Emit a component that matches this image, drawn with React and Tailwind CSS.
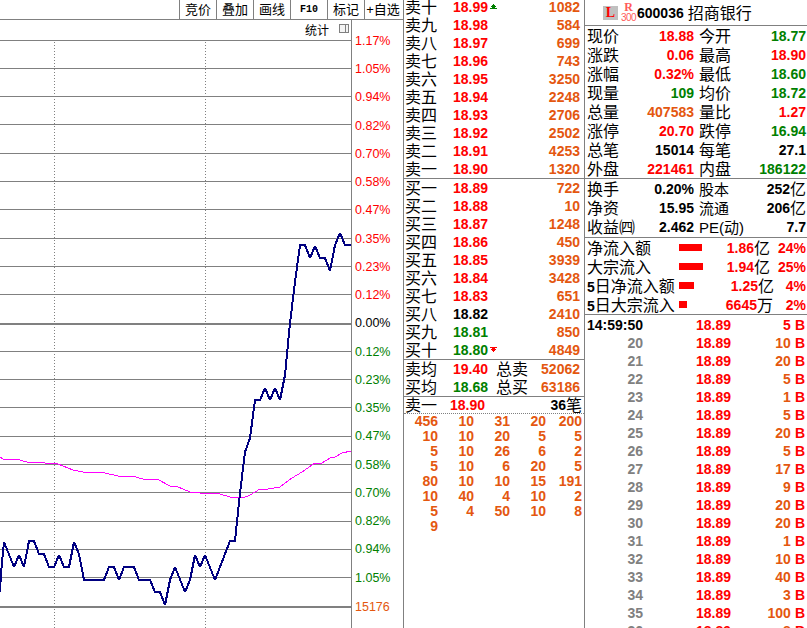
import React from 'react';

const RED = 'text-[#ff0000]';
const GREEN = 'text-[#008000]';
const ORANGE = 'text-[#e4570f]';
const BLACK = 'text-black';

const toolbarItems = ['竞价', '叠加', '画线', 'F10', '标记', '+自选'];

const axisLabels = [
  ['1.17%', RED], ['1.05%', RED], ['0.94%', RED], ['0.82%', RED], ['0.70%', RED],
  ['0.58%', RED], ['0.47%', RED], ['0.35%', RED], ['0.23%', RED], ['0.12%', RED],
  ['0.00%', BLACK],
  ['0.12%', GREEN], ['0.23%', GREEN], ['0.35%', GREEN], ['0.47%', GREEN], ['0.58%', GREEN],
  ['0.70%', GREEN], ['0.82%', GREEN], ['0.94%', GREEN], ['1.05%', GREEN],
];

const gridY = [68, 96, 124, 153, 181, 209, 238, 266, 294, 351, 379, 407, 436, 464, 492, 521, 549, 577];

const pricePoints = [
  [0, 592], [1, 573], [4, 542], [14, 567], [19, 555], [24, 567], [29, 541], [34, 541], [39, 554], [44, 554],
  [49, 567], [54, 567], [59, 555], [64, 567], [69, 567], [74, 542], [79, 554], [84, 580], [104, 580], [109, 567],
  [114, 567], [119, 580], [124, 567], [134, 567], [139, 580], [150, 580], [155, 592], [160, 592], [165, 605],
  [170, 580], [175, 567], [185, 592], [190, 580], [195, 555], [200, 567], [205, 555], [215, 580], [230, 541],
  [235, 541], [240, 493], [245, 452], [250, 438], [255, 400], [260, 400], [265, 388], [270, 400], [275, 388],
  [280, 400], [285, 375], [290, 323], [295, 282], [300, 245], [305, 245], [310, 258], [315, 246], [320, 258],
  [325, 258], [330, 271], [335, 245], [340, 233], [345, 245], [351, 245],
];

const avgPoints = [
  [0, 457], [3, 459], [16, 459], [27, 462], [45, 463], [58, 464], [73, 470], [83, 472], [105, 473], [118, 476],
  [132, 476], [143, 479], [157, 479], [170, 486], [178, 487], [190, 492], [200, 493], [220, 494], [230, 497],
  [243, 498], [250, 495], [260, 489], [268, 489], [280, 487], [292, 478], [302, 472], [315, 463], [322, 463],
  [330, 458], [335, 457], [342, 453], [351, 451],
];

const sells = [
  ['卖十', '18.99', '1082'], ['卖九', '18.98', '584'], ['卖八', '18.97', '699'], ['卖七', '18.96', '743'],
  ['卖六', '18.95', '3250'], ['卖五', '18.94', '2248'], ['卖四', '18.93', '2706'], ['卖三', '18.92', '2502'],
  ['卖二', '18.91', '4253'], ['卖一', '18.90', '1320'],
];

const buys = [
  ['买一', '18.89', '722', RED], ['买二', '18.88', '10', RED], ['买三', '18.87', '1248', RED],
  ['买四', '18.86', '450', RED], ['买五', '18.85', '3939', RED], ['买六', '18.84', '3428', RED],
  ['买七', '18.83', '651', RED], ['买八', '18.82', '2410', BLACK], ['买九', '18.81', '850', GREEN],
  ['买十', '18.80', '4849', GREEN],
];

const queue = [
  ['456', '10', '31', '20', '200'],
  ['10', '10', '20', '5', '5'],
  ['5', '10', '26', '6', '2'],
  ['5', '10', '6', '20', '5'],
  ['80', '10', '10', '15', '191'],
  ['10', '40', '4', '10', '2'],
  ['5', '4', '50', '10', '8'],
  ['9'],
];

const quotes = [
  ['现价', '18.88', RED, '今开', '18.77', GREEN],
  ['涨跌', '0.06', RED, '最高', '18.90', RED],
  ['涨幅', '0.32%', RED, '最低', '18.60', GREEN],
  ['现量', '109', GREEN, '均价', '18.72', GREEN],
  ['总量', '407583', ORANGE, '量比', '1.27', RED],
  ['涨停', '20.70', RED, '跌停', '16.94', GREEN],
  ['总笔', '15014', BLACK, '每笔', '27.1', BLACK],
  ['外盘', '221461', RED, '内盘', '186122', GREEN],
];

const fundamentals = [
  ['换手', '0.20%', '股本', '252', '亿'],
  ['净资', '15.95', '流通', '206', '亿'],
  ['收益㈣', '2.462', 'PE(动)', '7.7', ''],
];

const flows = [
  ['', '净流入额', 'w-[23px]', '1.86', '亿', 'w-[91px]', '24%'],
  ['', '大宗流入', 'w-[24px]', '1.94', '亿', 'w-[91px]', '25%'],
  ['5', '日净流入额', 'w-[15px]', '1.25', '亿', 'w-[95px]', '4%'],
  ['5', '日大宗流入', 'w-[8px]', '6645', '万', 'w-[94px]', '2%'],
];

const ticks = [
  ['14:59:50', '5'], ['20', '10'], ['21', '20'], ['22', '5'], ['23', '1'], ['24', '5'],
  ['25', '20'], ['26', '5'], ['27', '17'], ['28', '9'], ['29', '20'], ['30', '20'],
  ['31', '1'], ['32', '10'], ['33', '40'], ['34', '3'], ['35', '100'], ['36', '8'],
];

const toPoints = (pts) => pts.map(([x, y]) => `${x},${y}`).join(' ');

// CJK captions sit a pixel below the digits beside them
const Label = ({ className = '', children }) => (
  <span className={`mt-[2px] text-[16px] leading-[16px] font-normal text-black whitespace-nowrap ${className}`}>{children}</span>
);

const Num = ({ className = '', children }) => (
  <span className={`text-[14px] leading-[14px] font-bold whitespace-nowrap ${className}`}>{children}</span>
);

const UpMark = () => (
  <svg width="7" height="7" viewBox="0 0 7 7" className="ml-[2px] shrink-0" shapeRendering="crispEdges" fill="#008000">
    <rect x="3" y="0" width="1" height="1" />
    <rect x="2" y="1" width="3" height="1" />
    <rect x="1" y="2" width="5" height="1" />
    <rect x="2" y="3" width="3" height="1" />
    <rect x="0" y="4" width="7" height="1" />
  </svg>
);

const DownMark = () => (
  <svg width="7" height="7" viewBox="0 0 7 7" className="ml-[2px] shrink-0" shapeRendering="crispEdges" fill="#ff0000">
    <rect x="0" y="0" width="7" height="1" />
    <rect x="2" y="1" width="3" height="1" />
    <rect x="1" y="2" width="5" height="1" />
    <rect x="2" y="3" width="3" height="1" />
    <rect x="3" y="4" width="1" height="1" />
  </svg>
);

const PriceChart = () => (
  <svg width="351" height="587" viewBox="0 41 351 587" className="block">
    <g stroke="#808080" strokeWidth="1" shapeRendering="crispEdges">
      {gridY.map((y) => (
        <line key={y} x1="0" x2="351" y1={y + 0.5} y2={y + 0.5} />
      ))}
      <line x1="0" x2="351" y1="324" y2="324" strokeWidth="2" />
      <line x1="0" x2="351" y1="607" y2="607" strokeWidth="2" />
      <line x1="54.5" x2="54.5" y1="42" y2="628" strokeDasharray="1 2" />
      <line x1="205.5" x2="205.5" y1="42" y2="628" strokeDasharray="1 2" />
    </g>
    <polyline points={toPoints(avgPoints)} fill="none" stroke="#ff00ff" strokeWidth="1" shapeRendering="crispEdges" />
    <polyline points={toPoints(pricePoints)} fill="none" stroke="#000080" strokeWidth="2" strokeLinejoin="bevel" shapeRendering="crispEdges" />
  </svg>
);

const OrderRow = ({ name, price, volume, priceColor, mark }) => (
  <div className="flex h-[18px] shrink-0 items-center">
    <Label className="w-[48px]">{name}</Label>
    <Num className={priceColor}>{price}</Num>
    {mark}
    <Num className={`ml-auto ${ORANGE}`}>{volume}</Num>
  </div>
);

const App = () => {
  return (
    <div className="flex h-[628px] w-[807px] overflow-hidden bg-white font-['Liberation_Sans','Noto_Sans_CJK_SC',sans-serif]">
      {/* chart side */}
      <div className="flex w-[404px] shrink-0 flex-col border-r border-[#808080]">
        <div className="flex h-[20px] shrink-0 justify-end border-b border-[#808080] pr-[2px]">
          {toolbarItems.map((item) => (
            <div
              key={item}
              className={`flex w-[37px] items-center justify-center border-l border-[#808080] text-black ${
                item === 'F10' ? "font-['Liberation_Mono'] text-[10px] font-bold" : 'text-[13px]'
              }`}
            >
              {item}
            </div>
          ))}
        </div>
        <div className="flex min-h-0 flex-1">
          <div className="flex w-[352px] shrink-0 flex-col border-r border-[#808080]">
            <div className="flex h-[21px] shrink-0 items-center justify-end border-b border-[#808080] pr-[2px]">
              <span className="mr-[10px] mt-[1px] text-[12px] text-black">统计</span>
              <span className="mb-[3px] flex h-[9px] w-[10px] justify-end border border-[#808080] bg-[#f4f4f4]">
                <span className="w-[3px] border-l border-[#808080]" />
              </span>
            </div>
            <PriceChart />
          </div>
          <div className="flex flex-1 flex-col pl-[3px] pt-[7px]">
            {axisLabels.map(([text, color], i) => (
              <div key={i} className={`flex h-[28.26px] shrink-0 items-center text-[12.5px] ${color}`}>
                {text}
              </div>
            ))}
            <div className={`mt-[1px] flex h-[28px] items-center text-[12.5px] ${ORANGE}`}>15176</div>
          </div>
        </div>
      </div>

      {/* order book */}
      <div className="flex w-[181px] shrink-0 flex-col border-r border-[#808080]">
        <div className="-mt-[2px] flex h-[181px] shrink-0 flex-col border-b border-[#808080] pl-[1px] pr-[4px]">
          {sells.map(([name, price, volume], i) => (
            <OrderRow key={name} name={name} price={price} volume={volume} priceColor={RED} mark={i === 0 ? <UpMark /> : null} />
          ))}
        </div>
        <div className="flex h-[181px] shrink-0 flex-col border-b border-[#808080] pl-[1px] pr-[4px]">
          {buys.map(([name, price, volume, color], i) => (
            <OrderRow key={name} name={name} price={price} volume={volume} priceColor={color} mark={i === 9 ? <DownMark /> : null} />
          ))}
        </div>
        <div className="flex h-[37px] shrink-0 flex-col border-b border-[#808080] pl-[1px] pr-[4px]">
          <div className="flex h-[18px] items-center">
            <Label className="w-[48px]">卖均</Label>
            <Num className={`w-[43px] ${RED}`}>19.40</Num>
            <Label>总卖</Label>
            <Num className={`ml-auto ${ORANGE}`}>52062</Num>
          </div>
          <div className="flex h-[18px] items-center">
            <Label className="w-[48px]">买均</Label>
            <Num className={`w-[43px] ${GREEN}`}>18.68</Num>
            <Label>总买</Label>
            <Num className={`ml-auto ${ORANGE}`}>63186</Num>
          </div>
        </div>
        <div className="flex h-[17px] shrink-0 items-center border-b border-dotted border-[#808080] pl-[1px] pr-[2px]">
          <Label className="w-[45px]">卖一</Label>
          <Num className={RED}>18.90</Num>
          <span className="ml-auto flex items-center">
            <Num className={BLACK}>36</Num>
            <Label>笔</Label>
          </span>
        </div>
        <div className="grid grid-cols-[33px_36px_36px_36px_36px] pl-[1px] [grid-auto-rows:15px]">
          {queue.flat().map((value, i) => (
            <Num key={i} className={`text-right leading-[15px] ${ORANGE}`}>
              {value}
            </Num>
          ))}
        </div>
      </div>

      {/* quote panel */}
      <div className="flex min-w-0 flex-1 flex-col">
        <div className="flex h-[26px] shrink-0 items-center border-b border-[#808080] pl-[18px]">
          <span className="flex h-[14px] w-[15px] items-center justify-center bg-[#c0c0c0] font-['Liberation_Serif'] text-[14px] font-bold leading-none text-[#ff0000]">
            L
          </span>
          <span className="ml-[3px] flex w-[15px] flex-col items-center text-[#ff5a5a]">
            <span className="font-['Liberation_Serif'] text-[12px] font-bold leading-[11px]">R</span>
            <span className="text-[10px] leading-[10px] tracking-[-0.5px]">300</span>
          </span>
          <Num className="ml-[1px] text-black">600036</Num>
          <Label className="ml-[4px] -mt-[1px]">招商银行</Label>
        </div>

        <div className="flex h-[153px] shrink-0 flex-col border-b border-[#808080] pl-[2px] pr-[1px]">
          {quotes.map(([a, av, ac, b, bv, bc]) => (
            <div key={a} className="flex h-[19px] shrink-0 items-center">
              <Label className="w-[32px]">{a}</Label>
              <Num className={`w-[75px] text-right ${ac}`}>{av}</Num>
              <Label className="ml-[5px] w-[32px]">{b}</Label>
              <Num className={`w-[75px] text-right ${bc}`}>{bv}</Num>
            </div>
          ))}
        </div>

        <div className="flex h-[59px] shrink-0 flex-col justify-center border-b border-[#808080] pl-[2px] pr-[1px]">
          {fundamentals.map(([a, av, b, bv, unit]) => (
            <div key={a} className="flex h-[19px] shrink-0 items-center">
              <Label className="w-[48px]">{a}</Label>
              <Num className={`w-[59px] text-right ${BLACK}`}>{av}</Num>
              <span className="ml-[5px] mt-[2px] w-[44px] whitespace-nowrap text-[15px] leading-[16px] text-black">{b}</span>
              <span className="flex w-[63px] items-center justify-end">
                <Num className={BLACK}>{bv}</Num>
                {unit && <Label>{unit}</Label>}
              </span>
            </div>
          ))}
        </div>

        <div className="flex h-[77px] shrink-0 flex-col border-b border-[#808080] pl-[2px] pr-[1px]">
          {flows.map(([lead, name, bar, value, unit, valueWidth, pct]) => (
            <div key={name} className="flex h-[19px] shrink-0 items-center">
              <Label className="w-[92px]">
                {lead && <b className="text-[14px]">{lead}</b>}
                {name}
              </Label>
              <span className="w-[0px]">
                <span className={`block h-[7px] bg-[#ff0000] ${bar}`} />
              </span>
              <span className={`flex shrink-0 items-center justify-end ${valueWidth}`}>
                <Num className={RED}>{value}</Num>
                <Label className={RED}>{unit}</Label>
              </span>
              <Num className={`ml-auto ${RED}`}>{pct}</Num>
            </div>
          ))}
        </div>

        <div className="flex min-h-0 flex-1 flex-col pl-[2px] pr-[2px] pt-[1px]">
          {ticks.map(([time, volume], i) => (
            <div key={time} className="flex h-[18px] shrink-0 items-center">
              <Num className={`w-[56px] text-right ${i === 0 ? BLACK : 'text-[#808080]'}`}>{time}</Num>
              <Num className={`ml-[53px] ${RED}`}>18.89</Num>
              <Num className={`ml-auto ${i === 0 ? RED : ORANGE}`}>{volume}</Num>
              <Num className={`ml-[4px] ${RED}`}>B</Num>
            </div>
          ))}
        </div>
      </div>
    </div>
  );
};

export default App;
